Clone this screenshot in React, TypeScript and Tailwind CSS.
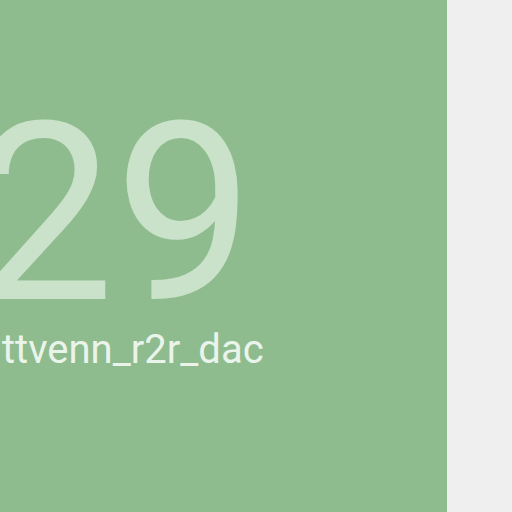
export default function App() {
  return (
    <div className="flex h-[512px] w-[512px] overflow-hidden bg-[#efefef]" style={{ fontFamily: "Roboto, sans-serif" }}>
      <div className="flex h-full w-[447px] shrink-0 flex-col overflow-hidden bg-[#8fbc8f]">
        <div className="ml-[-25px] mt-[95px] whitespace-nowrap text-[248px] leading-[240px] text-[#c9e2c9]">29</div>
        <div className="ml-[2px] mt-[1px] whitespace-nowrap text-[40px] leading-[28px] text-[#eaf4ea]">ttvenn_r2r_dac</div>
      </div>
    </div>
  );
}
